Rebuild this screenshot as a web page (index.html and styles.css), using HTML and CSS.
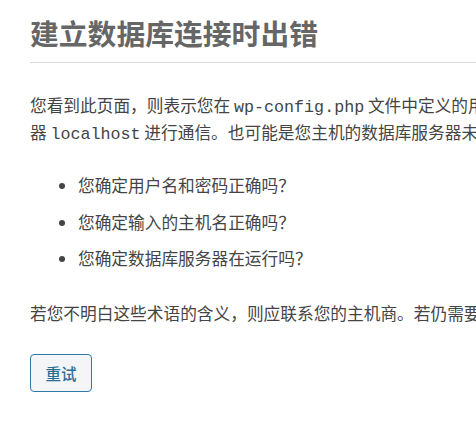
FILE: index.html
```html
<!DOCTYPE html>
<html lang="zh-CN">
<head>
<meta charset="utf-8">
<title>数据库连接错误</title>
<link rel="stylesheet" href="styles.css">
</head>
<body>
<div class="page">
  <h1 class="title">建立数据库连接时出错</h1>
  <p class="text">您看到此页面，则表示您在 <code class="code">wp-config.php</code> 文件中定义的用户名和密码信息不正确，或者我们无法与数据库服务器 <code class="code">localhost</code> 进行通信。也可能是您主机的数据库服务器未运行。</p>
  <ul class="list">
    <li class="item">您确定用户名和密码正确吗？</li>
    <li class="item">您确定输入的主机名正确吗？</li>
    <li class="item">您确定数据库服务器在运行吗？</li>
  </ul>
  <p class="text">若您不明白这些术语的含义，则应联系您的主机商。若仍需要帮助，您可以访问 WordPress 支持论坛。</p>
  <p class="actions"><a class="button" href="#">重试</a></p>
</div>
</body>
</html>
```

FILE: styles.css
```css
html, body {
  margin: 0;
  padding: 0;
  background: #fff;
  overflow: hidden;
}
body {
  font-family: "Noto Sans CJK SC", "Noto Sans", sans-serif;
  color: #444;
}
.page {
  width: 840px;
  padding: 13px 0 0 30px;
}
.title {
  margin: 0;
  font-size: 28.8px;
  line-height: 40px;
  font-weight: 700;
  color: #666;
  padding-bottom: 9px;
  border-bottom: 1px solid #dadada;
}
.text {
  margin: 30px 0 0;
  font-size: 16.7px;
  line-height: 25px;
}
.code {
  font-family: "Liberation Mono", monospace;
  font-size: 16.7px;
}
.list {
  margin: 26px 0 0;
  padding-left: 48px;
}
.item {
  font-size: 16.7px;
  line-height: 25px;
  margin-bottom: 11.5px;
}
.text + .actions {
  margin: 28px 0 0;
}
.button {
  display: inline-flex;
  align-items: center;
  justify-content: center;
  box-sizing: border-box;
  width: 62px;
  height: 38px;
  border: 1px solid #2f7ba6;
  border-radius: 4px;
  background: #f3f5f6;
  color: #2b6f95;
  font-size: 15.5px;
  font-weight: 500;
  text-decoration: none;
}
```
